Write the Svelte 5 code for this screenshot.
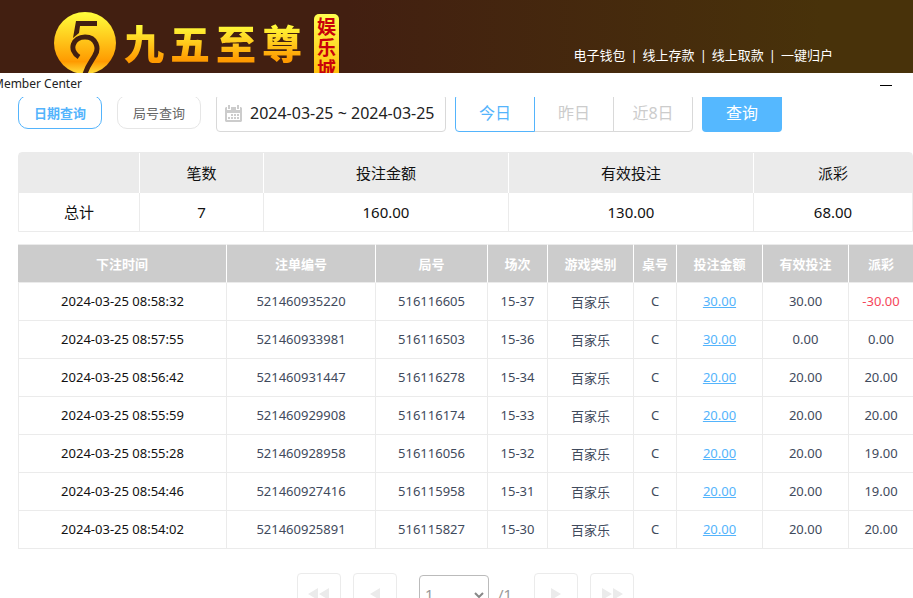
<script>
  const links = ['电子钱包', '线上存款', '线上取款', '一键归户'];
  const brand = ['九', '五', '至', '尊'];
  const summaryHead = ['', '笔数', '投注金额', '有效投注', '派彩'];
  const summary = ['总计', '7', '160.00', '130.00', '68.00'];
  const columns = ['下注时间', '注单编号', '局号', '场次', '游戏类别', '桌号', '投注金额', '有效投注', '派彩'];
  const rows = [
    ['2024-03-25 08:58:32', '521460935220', '516116605', '15-37', '30.00', '30.00', '-30.00'],
    ['2024-03-25 08:57:55', '521460933981', '516116503', '15-36', '30.00', '0.00', '0.00'],
    ['2024-03-25 08:56:42', '521460931447', '516116278', '15-34', '20.00', '20.00', '20.00'],
    ['2024-03-25 08:55:59', '521460929908', '516116174', '15-33', '20.00', '20.00', '20.00'],
    ['2024-03-25 08:55:28', '521460928958', '516116056', '15-32', '20.00', '20.00', '19.00'],
    ['2024-03-25 08:54:46', '521460927416', '516115958', '15-31', '20.00', '20.00', '19.00'],
    ['2024-03-25 08:54:02', '521460925891', '516115827', '15-30', '20.00', '20.00', '20.00']
  ];
  let range = $state('2024-03-25 ~ 2024-03-25');
</script>

<div class="page">
  <header>
    <div class="logo">
      <svg class="mark" viewBox="0 0 62 62" aria-hidden="true">
        <defs>
          <linearGradient id="gold" x1="0" y1="0" x2="0" y2="1">
            <stop offset="0" stop-color="#ffff3c" />
            <stop offset="0.8" stop-color="#ff9a00" />
            <stop offset="1" stop-color="#ffe03c" />
          </linearGradient>
        </defs>
        <circle cx="31" cy="31" r="31" fill="url(#gold)" />
        <path d="M22 9H43V14H26L25 21L19 26z" fill="#421f11" />
        <path d="M25 45C14 38 19 25 31 25C43 25 45 37 41 43C38 49 34 52 31 62" fill="none" stroke="#421f11" stroke-width="5" />
      </svg>
      <div class="brand">{#each brand as char}<span>{char}</span>{/each}</div>
      <span class="seal">娱乐城</span>
    </div>
    <nav>
      {#each links as link, i}
        {#if i}<span>|</span>{/if}<a href="#top">{link}</a>
      {/each}
    </nav>
  </header>

  <section class="window">
    <div class="titlebar">
      <span class="title">Member Center</span>
      <button class="minimize" aria-label="Minimize"></button>
    </div>
    <main>
      <div class="filters">
        <button class="pill on">日期查询</button>
        <button class="pill">局号查询</button>
        <label class="range">
          <svg viewBox="0 0 17 17" aria-hidden="true">
            <path fill="#ccc" d="M1 2h1v3h4V2h5v3h4V2h1l1 1v3H0V3zM3 0h2v4H3zM12 0h2v4h-2z" />
            <path fill="#ccc" fill-rule="evenodd" d="M0 6h17v10l-1 1H1l-1-1zM2 8v7h13V8z" />
            <path fill="#ccc" d="M6 9h2v2H6zM9 9h2v2H9zM12 9h2v2h-2zM3 12h2v2H3zM6 12h2v2H6zM9 12h2v2H9zM12 12h2v2h-2z" />
          </svg>
          <input aria-label="日期" bind:value={range} />
        </label>
        <div class="days">
          <button class="on">今日</button>
          <button>昨日</button>
          <button>近8日</button>
        </div>
        <button class="search">查询</button>
      </div>

      <table class="summary">
        <colgroup><col class="s1" /><col class="s2" /><col class="s3" /><col class="s3" /><col /></colgroup>
        <thead><tr>{#each summaryHead as h}<th>{h}</th>{/each}</tr></thead>
        <tbody><tr>{#each summary as v}<td>{v}</td>{/each}</tr></tbody>
      </table>

      <table class="bets">
        <colgroup>
          <col class="c1" /><col class="c2" /><col class="c3" /><col class="c4" /><col class="c5" />
          <col class="c6" /><col class="c5" /><col class="c5" /><col />
        </colgroup>
        <thead><tr>{#each columns as c}<th>{c}</th>{/each}</tr></thead>
        <tbody>
          {#each rows as [time, order, round, shoe, bet, valid, payout]}
            <tr>
              <td class="time">{time}</td>
              <td>{order}</td>
              <td>{round}</td>
              <td>{shoe}</td>
              <td>百家乐</td>
              <td>C</td>
              <td><a href="#bet">{bet}</a></td>
              <td>{valid}</td>
              <td class:loss={payout.startsWith('-')}>{payout}</td>
            </tr>
          {/each}
        </tbody>
      </table>

      <div class="pager">
        <button aria-label="第一页"><svg width="22" height="12" viewBox="0 0 22 12"><path d="M10 0v12L0 6zM21 0v12L11 6z" /></svg></button>
        <button aria-label="上一页"><svg width="10" height="12" viewBox="0 0 10 12"><path d="M10 0v12L0 6z" /></svg></button>
        <div class="jump">
          <div class="select">
            <select aria-label="页码"><option>1</option></select>
            <svg width="10" height="7" viewBox="0 0 10 7" aria-hidden="true"><path d="M1 1l4 4l4-4" /></svg>
          </div>
          <span>/1</span>
        </div>
        <button aria-label="下一页"><svg width="10" height="12" viewBox="0 0 10 12"><path d="M0 0v12L10 6z" /></svg></button>
        <button aria-label="最后一页"><svg width="22" height="12" viewBox="0 0 22 12"><path d="M1 0v12L11 6zM12 0v12L22 6z" /></svg></button>
      </div>
    </main>
  </section>
</div>

<style>
  .page {
    height: 100vh;
    overflow: hidden;
    display: flex;
    flex-direction: column;
    background: #fff;
    font-family: 'Noto Sans', 'Noto Sans CJK SC', sans-serif;
    font-size: 13px;
  }
  .page * { box-sizing: border-box; }
  button, input, select { font: inherit; margin: 0; }
  button { padding: 0; cursor: pointer; }

  header {
    flex: none;
    display: flex;
    justify-content: space-between;
    height: 73px;
    padding: 0 80px 0 54px;
    overflow: hidden;
    background: linear-gradient(90deg, #421f11 0%, #421f11 38%, #48320a 90%, #48320a 100%);
  }
  .logo { display: flex; align-items: flex-start; padding-top: 12px; }
  .mark { width: 62px; height: 62px; }
  .brand {
    margin-left: 8px;
    display: flex;
    gap: 6px;
    font: 900 40px/60px 'Noto Sans CJK SC', sans-serif;
    background: linear-gradient(#ffff3c 20%, #ff9a00 80%);
    background-clip: text;
    color: transparent;
  }
  .seal {
    margin: 2px 0 0 12px;
    width: 25px;
    height: 70px;
    padding-top: 3px;
    border-radius: 5px;
    background: linear-gradient(#ffff50, #ffb400);
    color: #c8000a;
    font-size: 19px;
    font-weight: 700;
    line-height: 21px;
    text-align: center;
  }
  nav { display: flex; gap: 5px; padding-top: 45px; line-height: 20px; color: #fff; }
  nav a { color: #fff; text-decoration: none; }

  .window { flex: 1; min-height: 0; display: flex; flex-direction: column; background: #fff; }
  .titlebar {
    flex: none;
    height: 24px;
    display: flex;
    justify-content: space-between;
    padding-right: 21px;
    font-size: 12px;
    line-height: 22px;
    color: #222;
  }
  .title { margin-left: -7px; }
  .minimize { width: 12px; height: 13px; border: 0; border-bottom: 1px solid #000; background: none; }

  main { flex: 1; min-height: 0; overflow: hidden; padding-left: 18px; }
  .filters { display: flex; align-items: flex-end; margin-top: -3px; height: 38px; }
  .pill {
    width: 84px;
    height: 34px;
    margin: 0 15px 3px 0;
    border: 1px solid #e6e6e6;
    border-radius: 10px;
    background: #fff;
    color: #666;
  }
  .pill.on { border-color: #54b4fc; color: #54b4fc; font-weight: 700; }
  .range {
    width: 230px;
    height: 38px;
    display: flex;
    align-items: center;
    gap: 8px;
    padding-left: 8px;
    border: 1px solid #d9d9d9;
    border-radius: 4px;
  }
  .range svg { width: 17px; height: 17px; flex: none; }
  .range input { flex: 1; min-width: 0; padding: 0; border: 0; outline: 0; background: none; font-size: 16px; color: #222; }
  .days { display: flex; margin: 0 9px; }
  .days button {
    width: 80px;
    height: 38px;
    margin-left: -1px;
    padding-bottom: 2px;
    border: 1px solid #d9d9d9;
    background: #fff;
    color: #ccc;
    font-size: 16px;
  }
  .days button:first-child { margin-left: 0; border-radius: 4px 0 0 4px; }
  .days button:last-child { border-radius: 0 4px 4px 0; }
  .days .on { position: relative; border-color: #54b4fc; color: #54b4fc; }
  .search { width: 80px; height: 38px; padding-bottom: 2px; border: 0; border-radius: 4px; background: #55b8ff; color: #fff; font-size: 16px; }

  table { width: 100%; table-layout: fixed; border-spacing: 0; text-align: center; }
  th, td { padding: 0 0 1px; }
  .summary { margin-top: 20px; border: 1px solid #ebebeb; border-radius: 4px 4px 0 0; font-size: 15px; color: #111; }
  .summary th { height: 40px; background: #ebebeb; font-weight: 400; }
  .summary td { height: 38px; }
  .summary th + th { border-left: 1px solid #fff; }
  .summary td + td { border-left: 1px solid #ebebeb; }
  .s1 { width: 120px; }
  .s2 { width: 124px; }
  .s3 { width: 245px; }

  .bets { margin-top: 12px; color: #3f4a5c; }
  .bets th { height: 39px; border-top: 1px solid #ebebeb; border-bottom: 1px solid #ebebeb; background: #ccc; color: #fff; font-weight: 700; }
  .bets td { height: 38px; border-bottom: 1px solid #ebebeb; border-left: 1px solid #ebebeb; }
  .bets th + th { border-left: 1px solid #fff; }
  .bets .time { color: #111; }
  .bets a { color: #54b4fc; }
  .bets .loss { color: #f5465a; }
  .c1 { width: 208px; }
  .c2 { width: 149px; }
  .c3 { width: 112px; }
  .c4 { width: 60px; }
  .c5 { width: 86px; }
  .c6 { width: 43px; }

  .pager { display: flex; align-items: center; gap: 12px; width: 337px; margin: 24px 0 0 279px; }
  .pager button { width: 44px; height: 42px; border: 1px solid #ebebeb; border-radius: 4px; background: #fff; }
  .pager button svg { display: block; margin: auto; fill: #ebebeb; }
  .jump { flex: 1; display: flex; align-items: center; gap: 9px; padding-left: 10px; font-size: 15px; color: #999; }
  .select { position: relative; width: 70px; height: 38px; }
  .select select {
    width: 100%;
    height: 100%;
    padding: 0 5px;
    appearance: none;
    border: 1px solid #bbb;
    border-radius: 4px;
    background: #fff;
    color: #999;
  }
  .select svg { position: absolute; right: 5px; top: 17px; fill: none; stroke: #888; stroke-width: 2; pointer-events: none; }
</style>
